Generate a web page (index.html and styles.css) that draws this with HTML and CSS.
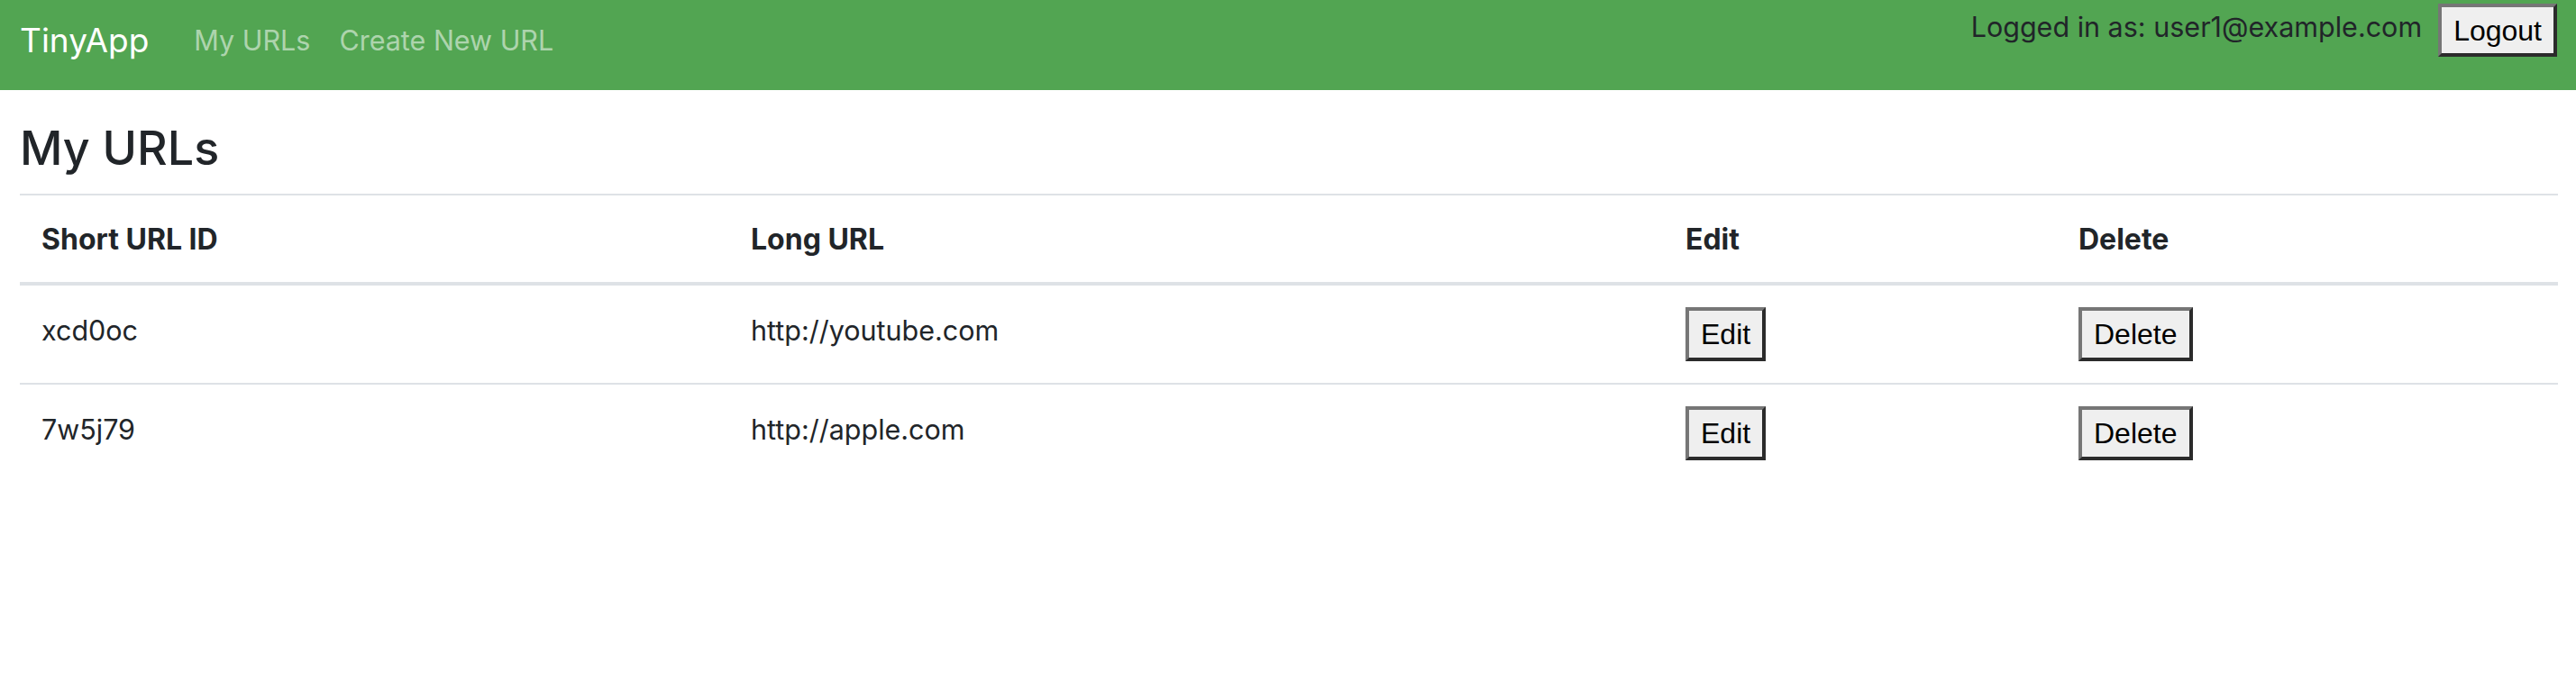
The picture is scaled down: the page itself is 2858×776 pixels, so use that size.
FILE: index.html
```html
<!DOCTYPE html>
<html lang="en">
<head>
<meta charset="utf-8">
<title>TinyApp</title>
<link rel="stylesheet" href="styles.css">
</head>
<body>
<nav class="navbar">
  <div class="nav-left">
    <a class="brand" href="#">TinyApp</a>
    <a class="nav-link" href="#">My URLs</a>
    <a class="nav-link" href="#">Create New URL</a>
  </div>
  <div class="nav-right">
    <span class="login-text">Logged in as: user1@example.com</span>
    <button class="btn">Logout</button>
  </div>
</nav>
<main class="page">
  <h2 class="title">My URLs</h2>
  <table class="url-table">
    <colgroup>
      <col class="c-short">
      <col class="c-long">
      <col class="c-edit">
      <col class="c-delete">
    </colgroup>
    <thead>
      <tr>
        <th>Short URL ID</th>
        <th>Long URL</th>
        <th>Edit</th>
        <th>Delete</th>
      </tr>
    </thead>
    <tbody>
      <tr>
        <td>xcd0oc</td>
        <td>http://youtube.com</td>
        <td><button class="btn">Edit</button></td>
        <td><button class="btn">Delete</button></td>
      </tr>
      <tr>
        <td>7w5j79</td>
        <td>http://apple.com</td>
        <td><button class="btn">Edit</button></td>
        <td><button class="btn">Delete</button></td>
      </tr>
    </tbody>
  </table>
</main>
</body>
</html>
```
FILE: styles.css
```css
* { box-sizing: border-box; }

html, body {
  margin: 0;
  padding: 0;
  background: #ffffff;
}

body {
  font-family: Inter, "Noto Sans", "Liberation Sans", sans-serif;
  font-size: 30.5px;
  color: #212529;
}

.navbar {
  display: flex;
  justify-content: space-between;
  align-items: flex-start;
  height: 100px;
  padding: 0 21px 0 22px;
  background: #52a552;
}

.nav-left {
  display: flex;
  align-items: center;
  height: 90px;
}

.brand {
  color: #ffffff;
  text-decoration: none;
  font-size: 37px;
  line-height: 90px;
  margin-right: 34px;
}

.nav-link {
  color: rgba(255, 255, 255, 0.55);
  text-decoration: none;
  line-height: 90px;
  padding: 0 16px;
}

.nav-right {
  display: flex;
  align-items: flex-start;
  gap: 18px;
  padding-top: 4px;
}

.login-text {
  margin-top: 3px;
  line-height: 46px;
  color: #212529;
}

.btn {
  font-family: "Liberation Sans", Arial, sans-serif;
  font-size: 32px;
  color: #000000;
  background: #efefef;
  height: 60px;
  padding: 0 13px;
  border: 4px solid;
  border-color: #767676 #2b2b2b #2b2b2b #767676;
  border-radius: 0;
  margin: 0;
  line-height: 1;
}

.nav-right .btn {
  height: 59px;
}

.page {
  padding: 0 20px 0 22px;
}

.title {
  margin: 34px 0 19px;
  font-size: 52px;
  font-weight: 500;
  line-height: 62px;
}

.url-table {
  width: 100%;
  border-collapse: collapse;
  table-layout: fixed;
}

.c-short { width: 787px; }
.c-long { width: 1037px; }
.c-edit { width: 436px; }

.url-table th {
  text-align: left;
  font-weight: 700;
  font-size: 32px;
  padding: 23px 24px 21px;
  line-height: 52px;
  border-top: 2px solid #dee2e6;
  border-bottom: 4px solid #dee2e6;
  vertical-align: top;
}

.url-table td {
  padding: 24px 24px 24px;
  line-height: 52px;
  border-top: 2px solid #dee2e6;
  vertical-align: top;
}

.url-table td .btn {
  display: block;
}
```
